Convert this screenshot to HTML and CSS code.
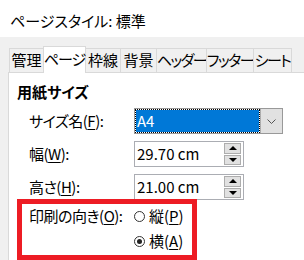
FILE: index.html
```html
<!DOCTYPE html>
<html lang="ja">
<head>
  <meta charset="UTF-8" />
  <title>ページスタイル: 標準</title>
  <link rel="stylesheet" href="styles.css">
</head>
<body>
  <div class="titlebar">ページスタイル: 標準</div>

  <div class="tabs">
    <div class="tab tab-kanri">管理</div>
    <div class="tab tab-page active">ページ</div>
    <div class="tab tab-waku">枠線</div>
    <div class="tab tab-haikei">背景</div>
    <div class="tab tab-header">ヘッダー</div>
    <div class="tab tab-footer">フッター</div>
    <div class="tab tab-sheet">シート</div>
  </div>

  <div class="panel">
    <div class="group-title">用紙サイズ</div>

    <div class="form">
      <div class="label">サイズ名(<u>F</u>):</div>
      <div class="combo">
        <div class="combo-focus"><div class="combo-value">A4</div></div>
        <div class="combo-btn">
          <svg width="9" height="5" viewBox="0 0 9 5"><path d="M0.5 0.5 L4.5 4.5 L8.5 0.5" fill="none" stroke="#555" stroke-width="1"/></svg>
        </div>
      </div>

      <div class="label">幅(<u>W</u>):</div>
      <div class="spin">
        <div class="spin-value">29.70 cm</div>
        <div class="spin-btns">
          <div class="spin-btn"><span class="arrow-up"></span></div>
          <div class="spin-btn"><span class="arrow-down"></span></div>
        </div>
      </div>

      <div class="label">高さ(<u>H</u>):</div>
      <div class="spin">
        <div class="spin-value">21.00 cm</div>
        <div class="spin-btns">
          <div class="spin-btn"><span class="arrow-up"></span></div>
          <div class="spin-btn"><span class="arrow-down"></span></div>
        </div>
      </div>

      <div class="label orient-label">印刷の向き(<u>O</u>):</div>
      <div class="radios">
        <div class="radio"><span class="dot"></span>縦(<u>P</u>)</div>
        <div class="radio checked"><span class="dot"></span>横(<u>A</u>)</div>
      </div>
    </div>

    <div class="highlight"></div>
  </div>
</body>
</html>
```

FILE: styles.css
```css
body {
  margin: 0;
  background-color: #f0f0f0;
  font-family: "Noto Sans CJK JP", sans-serif;
  font-size: 15px;
  font-feature-settings: "palt";
  color: #000;
  overflow: hidden;
}

u {
  text-decoration-thickness: 1px;
  text-underline-offset: 2px;
}

.titlebar {
  height: 37px;
  background: #fff;
  padding: 3px 0 0 10px;
  box-sizing: border-box;
  display: flex;
  align-items: center;
}

/* tab strip */
.tabs {
  display: flex;
  align-items: flex-end;
  padding: 9px 0 0 10px;
  height: 35px;
  box-sizing: border-box;
}

.tab {
  flex-shrink: 0;
  white-space: nowrap;
  height: 24px;
  line-height: 22px;
  border: 1px solid #d9d9d9;
  border-bottom: none;
  margin-left: -1px;
  box-sizing: border-box;
  background: #f0f0f0;
  display: flex;
  justify-content: center;
}

.tab-kanri { width: 35px; }
.tab-page { width: 43px; letter-spacing: -1px; }
.tab-waku { width: 36px; }
.tab-haikei { width: 37px; }
.tab-header { width: 51px; letter-spacing: -1.5px; }
.tab-footer { width: 48px; letter-spacing: -1.5px; }
.tab-sheet { width: 39px; letter-spacing: -1.5px; }

.tab.active {
  height: 27px;
  line-height: 24px;
  background: #fff;
  margin-bottom: -1px;
  position: relative;
  z-index: 1;
}

/* page body */
.panel {
  position: relative;
  margin-left: 8px;
  height: 178px;
  background: #fff;
  border-top: 1px solid #d9d9d9;
  border-left: 1px solid #d9d9d9;
  padding: 9px 0 0 8px;
}

.group-title {
  font-weight: bold;
  line-height: 20px;
}

.form {
  display: grid;
  grid-template-columns: 105px auto;
  align-items: center;
  row-gap: 7px;
  margin: 6px 0 0 12px;
}

.label {
  line-height: 20px;
  letter-spacing: -0.5px;
}

.orient-label {
  align-self: start;
  margin-top: -1px;
}

/* combo box */
.combo {
  width: 149px;
  height: 26px;
  display: flex;
  border: 1px solid #999;
  box-sizing: border-box;
}

.combo-focus {
  flex: 1;
  background: #fff;
}

.combo-value {
  height: 100%;
  box-sizing: border-box;
  border: 1px dotted #000;
  background: #0078d7;
  background-clip: padding-box;
  color: #fff;
  line-height: 22px;
  padding-left: 1px;
}

.combo-btn {
  width: 21px;
  background: #e1e1e1;
  border-left: 1px solid #adadad;
  display: flex;
  align-items: center;
  justify-content: center;
}

/* spin fields */
.spin {
  width: 110px;
  height: 26px;
  display: flex;
  border: 1px solid #abadb3;
  box-sizing: border-box;
}

.spin-value {
  flex: 1;
  line-height: 24px;
  padding-left: 2px;
}

.spin-btns {
  display: flex;
  flex-direction: column;
  gap: 1px;
  padding: 1px 2px 1px 0;
}

.spin-btn {
  width: 17px;
  flex: 1;
  background: #e1e1e1;
  border: 1px solid #adadad;
  box-sizing: border-box;
  display: flex;
  align-items: center;
  justify-content: center;
}

.arrow-up {
  border-left: 4px solid transparent;
  border-right: 4px solid transparent;
  border-bottom: 4px solid #000;
}

.arrow-down {
  border-left: 4px solid transparent;
  border-right: 4px solid transparent;
  border-top: 4px solid #000;
}

/* orientation radios */
.radios {
  display: flex;
  flex-direction: column;
  gap: 5px;
  margin-top: -1px;
}

.radio {
  display: flex;
  align-items: center;
  line-height: 20px;
}

.dot {
  width: 11px;
  height: 11px;
  border: 1px solid #333;
  border-radius: 50%;
  box-sizing: border-box;
  margin-right: 4px;
  display: flex;
  align-items: center;
  justify-content: center;
}

.radio.checked .dot::after {
  content: "";
  width: 5px;
  height: 5px;
  border-radius: 50%;
  background: #222;
}

/* red annotation frame drawn over the dialog */
.highlight {
  position: absolute;
  left: 8px;
  top: 126px;
  width: 180px;
  height: 61px;
  border: 5px solid #ed1c24;
  box-sizing: border-box;
}
```
